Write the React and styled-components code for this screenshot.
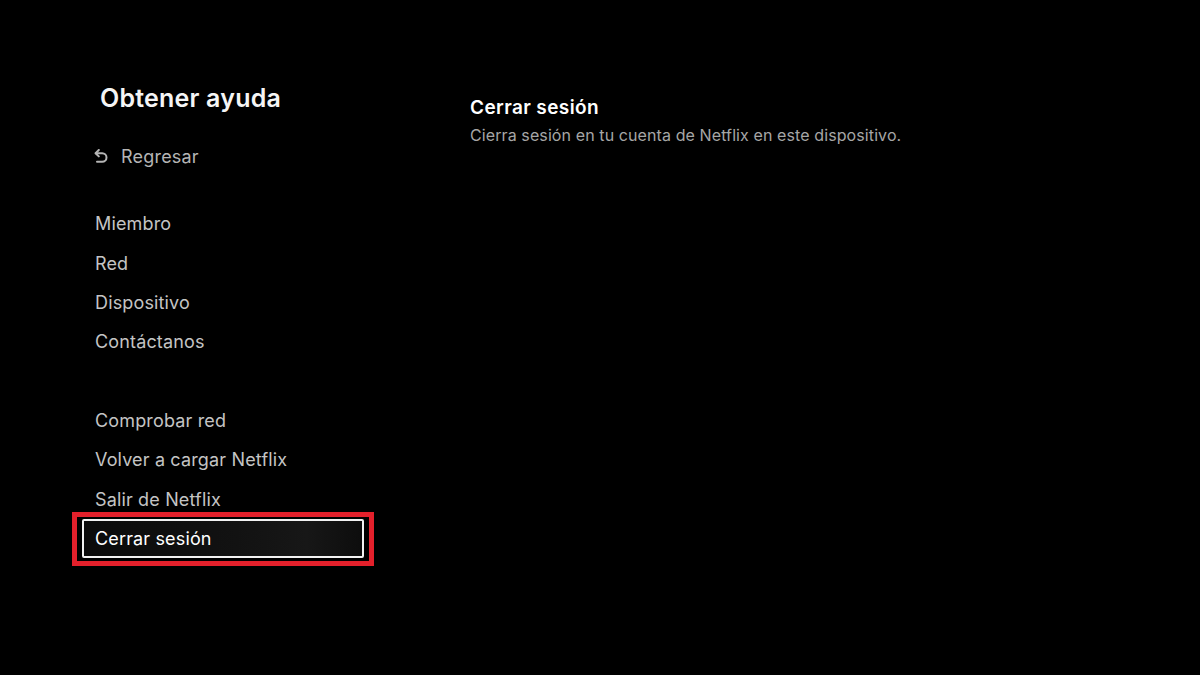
import React from "react";
import styled, { createGlobalStyle } from "styled-components";

const Global = createGlobalStyle`
  html, body { margin: 0; padding: 0; background: #000; }
  body { font-family: Inter, "Noto Sans", "Liberation Sans", sans-serif; -webkit-font-smoothing: antialiased; }
  #root { width: 1200px; height: 675px; background: #000; }
`;

const Screen = styled.div`
  width: 1200px;
  height: 675px;
  background: #000;
  display: flex;
  box-sizing: border-box;
  padding-left: 82px;
`;

const Sidebar = styled.nav`
  width: 282px;
  display: flex;
  flex-direction: column;
  padding-top: 83px;
`;

const Title = styled.h1`
  margin: 0 0 24px;
  padding-left: 18px;
  font-size: 25px;
  line-height: 30px;
  font-weight: 600;
  color: #f5f5f5;
  letter-spacing: 0.2px;
`;

const BackRow = styled.div`
  height: 39.3px;
  display: flex;
  align-items: center;
  gap: 13px;
  padding-left: 12px;
  font-size: 18px;
  letter-spacing: 0.2px;
  color: #b5b5b5;
  margin-bottom: 28px;
`;

const Group = styled.ul`
  list-style: none;
  margin: 0 0 ${p => p.$gap || 0}px;
  padding: 0;
  display: flex;
  flex-direction: column;
`;

const Item = styled.li`
  position: relative;
  height: 39.3px;
  box-sizing: border-box;
  display: flex;
  align-items: center;
  padding: 0 11px;
  font-size: 18px;
  letter-spacing: 0.15px;
  color: ${p => (p.$selected ? "#ffffff" : "#c4c4c4")};
  border: 2px solid ${p => (p.$selected ? "#f2f2f2" : "transparent")};
  border-radius: 2px;
  background: ${p =>
    p.$selected
      ? "linear-gradient(90deg, #0b0b0b 0%, #121212 55%, #171717 80%, #0d0d0d 100%)"
      : "transparent"};

  ${p =>
    p.$selected &&
    `
    &::before {
      content: "";
      position: absolute;
      left: -12px;
      right: -12px;
      top: -9px;
      bottom: -10px;
      border: 5px solid #e3202b;
      pointer-events: none;
    }
  `}
`;

const Detail = styled.section`
  margin-left: 106px;
  padding-top: 96px;
  display: flex;
  flex-direction: column;
  gap: 4px;
`;

const DetailTitle = styled.h2`
  margin: 0;
  font-size: 19px;
  line-height: 24px;
  font-weight: 600;
  letter-spacing: 0.4px;
  color: #ffffff;
`;

const DetailText = styled.p`
  margin: 0;
  font-size: 16px;
  line-height: 22px;
  letter-spacing: 0.1px;
  color: #a6a6a6;
`;

const BackIcon = () => (
  <svg width="14" height="15" viewBox="0 0 14 15" fill="none">
    <path
      d="M4.8 1 L1.6 4.2 L4.8 7.4"
      stroke="#b5b5b5"
      strokeWidth="2"
      strokeLinecap="round"
      strokeLinejoin="round"
      fill="none"
    />
    <path
      d="M1.8 4.2 H8.2 A4.3 4.3 0 0 1 8.2 12.8 H3"
      stroke="#b5b5b5"
      strokeWidth="2"
      strokeLinecap="round"
      fill="none"
    />
  </svg>
);

export default function App() {
  return (
    <>
      <Global />
      <Screen>
        <Sidebar>
          <Title>Obtener ayuda</Title>
          <BackRow>
            <BackIcon />
            Regresar
          </BackRow>
          <Group $gap={39.3}>
            <Item>Miembro</Item>
            <Item>Red</Item>
            <Item>Dispositivo</Item>
            <Item>Contáctanos</Item>
          </Group>
          <Group>
            <Item>Comprobar red</Item>
            <Item>Volver a cargar Netflix</Item>
            <Item>Salir de Netflix</Item>
            <Item $selected>Cerrar sesión</Item>
          </Group>
        </Sidebar>
        <Detail>
          <DetailTitle>Cerrar sesión</DetailTitle>
          <DetailText>Cierra sesión en tu cuenta de Netflix en este dispositivo.</DetailText>
        </Detail>
      </Screen>
    </>
  );
}
